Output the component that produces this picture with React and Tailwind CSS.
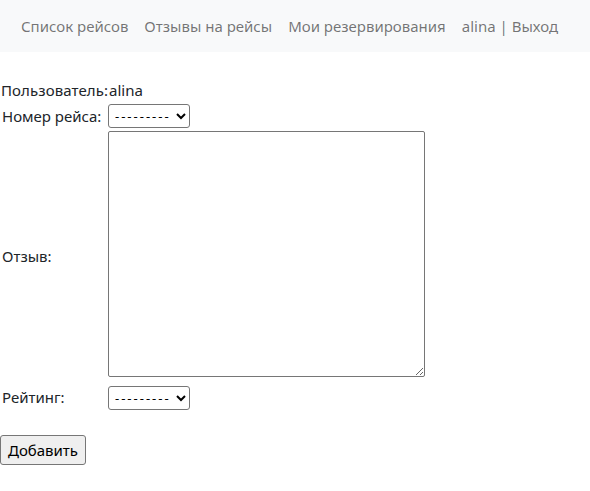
import React from "react";

function Select() {
  return (
    <select className="w-[82px] h-[24px] border border-[#767676] rounded-[3px] bg-white text-[13px] text-black pl-[2px] tracking-[2px] font-['Noto_Sans',sans-serif] appearance-auto">
      <option>---------</option>
    </select>
  );
}

export default function App() {
  return (
    <div className="min-h-[491px] bg-white text-[#212529] font-['Noto_Sans',sans-serif] text-[15px]">
      <nav className="h-[52px] bg-[#f8f9fa] flex items-center pl-[13px]">
        {["Список рейсов", "Отзывы на рейсы", "Мои резервирования", "alina | Выход"].map((t) => (
          <a key={t} className="px-2 text-[15px] text-[rgba(0,0,0,0.55)] leading-6 cursor-pointer">
            {t}
          </a>
        ))}
      </nav>
      <form className="pt-[28px] flex flex-col">
        <div className="flex items-center h-[20px]">
          <span className="w-[108px] pl-[1px] tracking-[0.1px]">Пользователь:</span>
          <span className="pl-[1px]">alina</span>
        </div>
        <div className="flex items-center mt-[4px] h-[24px]">
          <span className="w-[108px] pl-[2px]">Номер рейса:</span>
          <Select />
        </div>
        <div className="flex items-center mt-[3px]">
          <span className="w-[108px] pl-[2px] pt-[5px]">Отзыв:</span>
          <textarea className="w-[317px] h-[246px] border border-[#767676] rounded-[2px] bg-white resize-y" />
        </div>
        <div className="flex items-center mt-[8px] h-[25px]">
          <span className="w-[108px] pl-[2px]">Рейтинг:</span>
          <Select />
        </div>
        <div className="mt-[25px]">
          <button type="button" className="w-[86px] h-[30px] border border-[#767676] rounded-[3px] bg-[#efefef] text-black text-[15px]">
            Добавить
          </button>
        </div>
      </form>
    </div>
  );
}
